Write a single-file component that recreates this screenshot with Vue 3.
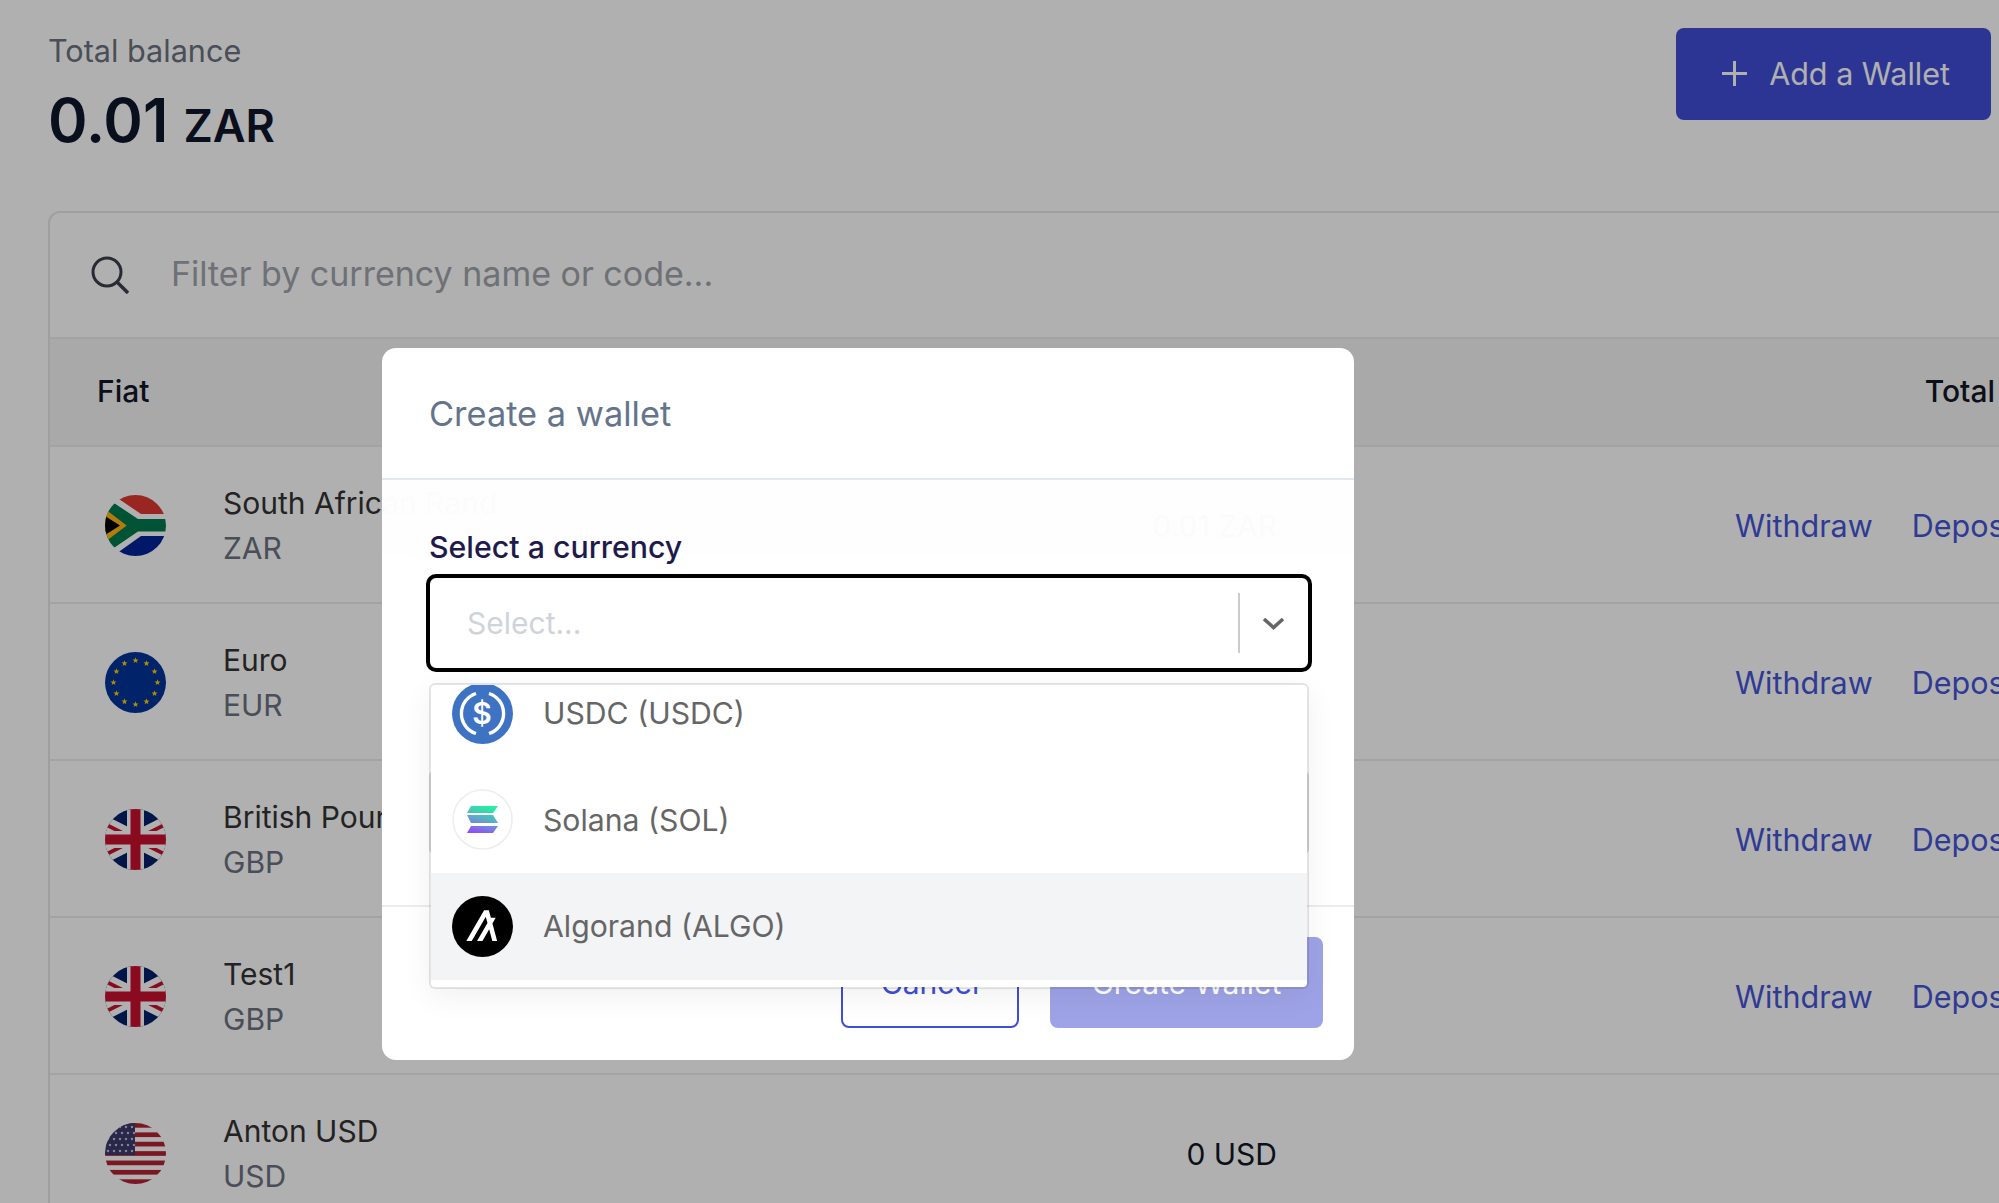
<script setup>
const rows = [
  { name: 'South African Rand', code: 'ZAR', total: '0.01 ZAR', flag: 'za', actions: true },
  { name: 'Euro', code: 'EUR', total: '0 EUR', flag: 'eu', actions: true },
  { name: 'British Pound', code: 'GBP', total: '0 GBP', flag: 'gb', actions: true },
  { name: 'Test1', code: 'GBP', total: '0 GBP', flag: 'gb', actions: true },
  { name: 'Anton USD', code: 'USD', total: '0 USD', flag: 'us', actions: false }
]

// five point star as a polygon string
const star = (cx, cy, r) => {
  const pts = []
  for (let i = 0; i < 10; i++) {
    const rad = i % 2 ? r * 0.42 : r
    const a = -Math.PI / 2 + (i * Math.PI) / 5
    pts.push((cx + rad * Math.cos(a)).toFixed(2) + ',' + (cy + rad * Math.sin(a)).toFixed(2))
  }
  return pts.join(' ')
}

const euStars = Array.from({ length: 12 }, (_, i) => {
  const a = (i * Math.PI) / 6
  return star(30.5 + 22 * Math.cos(a), 30.5 + 22 * Math.sin(a), 3.2)
})

const usStripes = [0, 2, 4, 6, 8, 10, 12].map((i) => (i * 61) / 13)

const usStars = []
for (let r = 0; r < 5; r++) {
  for (let c = 0; c < 5; c++) {
    usStars.push(star(3 + c * 6 + (r % 2 ? 2 : 0), 4 + r * 6, 1.6))
  }
}
</script>

<template>
  <div class="page">
    <div class="top">
      <div class="balance">
        <div class="balance-label">Total balance</div>
        <div class="balance-value">0.01 <span class="balance-code">ZAR</span></div>
      </div>
      <button class="add-btn">
        <svg class="plus" viewBox="0 0 25 25" width="25" height="25">
          <path d="M12.5 0v25M0 12.5h25" stroke="currentColor" stroke-width="3" fill="none" />
        </svg>
        Add a Wallet
      </button>
    </div>

    <div class="card">
      <div class="search">
        <svg class="search-icon" viewBox="0 0 38 38" width="38" height="38">
          <circle cx="16" cy="16" r="14" stroke="#3a3f4a" stroke-width="3" fill="none" />
          <path d="M26 26l11 11" stroke="#3a3f4a" stroke-width="3.4" fill="none" />
        </svg>
        <span class="search-text">Filter by currency name or code...</span>
      </div>

      <div class="head">
        <span>Fiat</span>
        <span class="head-total">Total</span>
      </div>

      <div v-for="r in rows" :key="r.name + r.flag" class="row">
        <svg v-if="r.flag === 'za'" class="flag" viewBox="0 0 61 61">
          <rect width="61" height="61" fill="#fff" />
          <path d="M8 0L36 19H61V0Z" fill="#de3831" />
          <path d="M8 61L36 41H61V61Z" fill="#002395" />
          <path d="M0 2L33 24H61V36.5H33L0 59Z" fill="#007a4d" />
          <path d="M0 14L21.7 30.5L0 47Z" fill="#ffb612" />
          <path d="M0 21L15 30.5L0 40Z" fill="#000" />
        </svg>

        <svg v-else-if="r.flag === 'eu'" class="flag" viewBox="0 0 61 61">
          <rect width="61" height="61" fill="#003399" />
          <polygon v-for="(s, i) in euStars" :key="i" :points="s" fill="#ffcc00" />
        </svg>

        <svg v-else-if="r.flag === 'gb'" class="flag" viewBox="0 0 61 61">
          <rect width="61" height="61" fill="#012169" />
          <path d="M-30 0L91 61M91 0L-30 61" stroke="#fff" stroke-width="16" />
          <path d="M-30 0L91 61M91 0L-30 61" stroke="#c8102e" stroke-width="4" />
          <path d="M30.5 0V61M0 30.5H61" stroke="#fff" stroke-width="17" />
          <path d="M30.5 0V61M0 30.5H61" stroke="#c8102e" stroke-width="10" />
        </svg>

        <svg v-else class="flag" viewBox="0 0 61 61">
          <rect width="61" height="61" fill="#fff" />
          <rect v-for="y in usStripes" :key="y" x="0" :y="y" width="61" height="4.7" fill="#b22234" />
          <rect width="30" height="32" fill="#3c3b6e" />
          <polygon v-for="(s, i) in usStars" :key="i" :points="s" fill="#fff" />
        </svg>

        <div class="names">
          <div class="name">{{ r.name }}</div>
          <div class="code">{{ r.code }}</div>
        </div>
        <div class="total">{{ r.total }}</div>
        <div v-if="r.actions" class="actions">
          <a>Withdraw</a>
          <a>Deposit</a>
        </div>
      </div>
    </div>

    <div class="overlay">
      <div class="modal">
        <div class="modal-head">Create a wallet</div>
        <div class="modal-body">
          <div class="field-label">Select a currency</div>
          <div class="select-wrap">
            <div class="select">
              <span class="select-placeholder">Select...</span>
              <span class="select-sep"></span>
              <svg class="chevron" viewBox="0 0 23 13" width="23" height="13">
                <path d="M2 2l9.5 8.5L21 2" stroke="#666" stroke-width="3.6" fill="none" />
              </svg>
            </div>
            <div class="dropdown">
              <div class="options">
                <div class="option">
                  <svg class="coin" viewBox="0 0 61 61">
                    <circle cx="30.5" cy="30.5" r="30.5" fill="#3e73c4" />
                    <path d="M24 10.5A21 21 0 0 0 24 50.5M37 10.5A21 21 0 0 1 37 50.5" stroke="#fff" stroke-width="3.4" fill="none" />
                    <text x="30" y="41" text-anchor="middle" class="coin-dollar">$</text>
                  </svg>
                  USDC (USDC)
                </div>
                <div class="option">
                  <svg class="coin coin-sol" viewBox="0 0 61 61">
                    <defs>
                      <linearGradient id="solGrad" gradientUnits="userSpaceOnUse" x1="34" y1="15" x2="26" y2="46">
                        <stop offset="0" stop-color="#19fb9b" />
                        <stop offset="0.5" stop-color="#5fa8c8" />
                        <stop offset="1" stop-color="#9945ff" />
                      </linearGradient>
                    </defs>
                    <circle cx="30.5" cy="30.5" r="29.5" fill="#fff" stroke="#eeeef2" stroke-width="1.6" />
                    <path d="M19 17H46L41 24H15Z" fill="url(#solGrad)" />
                    <path d="M15 26H41L46 34H19Z" fill="url(#solGrad)" />
                    <path d="M19 37H46L41 44H15Z" fill="url(#solGrad)" />
                  </svg>
                  Solana (SOL)
                </div>
                <div class="option option-active">
                  <svg class="coin" viewBox="0 0 61 61">
                    <circle cx="30.5" cy="30.5" r="30.5" fill="#000" />
                    <path transform="translate(14 12) scale(0.33)" d="M94.3 100H79.7L70.2 64.6 49.8 100H33.5L65.1 45.3 60 26.4 17.4 100H1L54.9 6.6H69.2L75.4 29.7H90L80.1 46.9 94.3 100Z" fill="#fff" />
                  </svg>
                  Algorand (ALGO)
                </div>
              </div>
            </div>
          </div>
          <div class="second-input"></div>
        </div>
        <div class="modal-foot">
          <button class="btn-cancel">Cancel</button>
          <button class="btn-create">Create Wallet</button>
        </div>
      </div>
    </div>
  </div>
</template>

<style>
html, body {
  margin: 0;
  background: #fff;
}
</style>

<style scoped>
.page {
  position: relative;
  width: 1999px;
  height: 1203px;
  overflow: hidden;
  background: #fff;
  font-family: Inter, "Liberation Sans", sans-serif;
  color: #111827;
}

.top {
  display: flex;
  justify-content: space-between;
  align-items: flex-start;
  height: 211px;
  padding: 28px 8px 0 48px;
  box-sizing: border-box;
}

.balance-label {
  font-size: 30.6px;
  line-height: 44px;
  margin-top: 1px;
  color: #6b7280;
}

.balance-value {
  font-size: 60px;
  line-height: 72px;
  font-weight: 600;
  color: #0f172a;
  margin-top: 11px;
}

.balance-code {
  font-size: 45px;
}

.add-btn {
  display: flex;
  align-items: center;
  gap: 22px;
  height: 92px;
  padding: 0 41px 2px 46px;
  border: 0;
  border-radius: 8px;
  background: #404ed6;
  color: #fff;
  font-family: inherit;
  font-size: 30.5px;
}

.card {
  width: 2100px;
  margin-left: 48px;
  border: 2px solid #e6e6e6;
  border-radius: 12px 0 0 0;
  box-sizing: border-box;
}

.search {
  display: flex;
  align-items: center;
  height: 124px;
  padding-left: 41px;
  border-bottom: 2px solid #ececec;
}

.search-icon {
  margin-right: 42px;
}

.search-text {
  margin-bottom: 4px;
  font-size: 34px;
  color: #a0a4ab;
}

.head {
  display: flex;
  align-items: center;
  height: 104px;
  padding: 0 151px 2px 47px;
  border-bottom: 2px solid #ececec;
  background: #f5f5f5;
  font-size: 30px;
  font-weight: 500;
}

.head-total {
  margin-left: auto;
}

.row {
  display: grid;
  grid-template-columns: 61px 700px 411px auto;
  align-items: center;
  height: 153px;
  padding: 2px 0 0 55px;
  border-bottom: 2px solid #ececec;
}

.flag {
  width: 61px;
  height: 61px;
  border-radius: 50%;
}

.names {
  padding-left: 57px;
}

.name {
  font-size: 30px;
  line-height: 45px;
  color: #333;
}

.code {
  font-size: 30px;
  line-height: 45px;
  color: #6b7280;
}

.total {
  font-size: 30px;
  text-align: right;
  color: #111827;
}

.actions {
  display: flex;
  gap: 39px;
  padding-left: 458px;
  font-size: 30.5px;
  color: #4555d8;
}

.overlay {
  position: absolute;
  inset: 0;
  background: rgba(0, 0, 0, 0.31);
}

/* only the strip under the header lets the first row show through faintly */
.modal {
  position: absolute;
  left: 382px;
  top: 348px;
  width: 972px;
  height: 712px;
  border-radius: 14px;
  background: linear-gradient(#fff 132px, rgba(255, 255, 255, 0.985) 132px, rgba(255, 255, 255, 0.985) 205px, #fff 205px);
}

.modal-head {
  display: flex;
  align-items: center;
  height: 130px;
  padding-left: 47px;
  border-bottom: 2px solid #e2e8f0;
  font-size: 34.4px;
  color: #64748b;
}

.modal-body {
  padding: 47px 45px 50px 47px;
}

.field-label {
  height: 40px;
  margin-bottom: 7px;
  font-size: 30.3px;
  line-height: 40px;
  font-weight: 500;
  color: #1e1b4b;
}

.select-wrap {
  position: relative;
}

.select {
  display: flex;
  align-items: center;
  height: 98px;
  margin: 0 -3px;
  padding-left: 37px;
  border: 4px solid #000;
  border-radius: 10px;
  box-sizing: border-box;
  background: #fff;
}

.select-placeholder {
  flex: 1;
  font-size: 30px;
  color: #d0d4da;
}

.select-sep {
  width: 2px;
  height: 60px;
  background: #ccc;
}

.chevron {
  margin: 0 23px 0 22px;
}

.dropdown {
  position: absolute;
  z-index: 2;
  top: 109px;
  left: 0;
  right: 0;
  height: 306px;
  box-sizing: border-box;
  border: 2px solid rgba(0, 0, 0, 0.1);
  border-radius: 6px;
  background: #fff;
  background-clip: padding-box;
  box-shadow: 0 8px 30px rgba(0, 0, 0, 0.06);
  overflow: hidden;
}

.options {
  margin-top: -25px;
}

.option {
  display: flex;
  align-items: center;
  gap: 30px;
  height: 106.5px;
  padding-left: 21px;
  font-size: 30.2px;
  color: #666;
}

.option-active {
  background: #f3f4f6;
}

.coin {
  width: 61px;
  height: 61px;
  flex: none;
}

.coin-dollar {
  font-size: 30px;
  font-weight: 600;
  fill: #fff;
}

.second-input {
  height: 85px;
  margin-top: 98px;
  border: 2px solid #ddd;
  border-radius: 6px;
  box-sizing: border-box;
}

.modal-foot {
  display: flex;
  justify-content: flex-end;
  gap: 31px;
  padding: 30px 31px 32px;
  border-top: 2px solid #ececec;
}

.modal-foot button {
  height: 91px;
  border-radius: 8px;
  font-family: inherit;
  font-size: 30px;
}

.btn-cancel {
  width: 178px;
  border: 2px solid #404ed6;
  background: #fff;
  color: #404ed6;
}

.btn-create {
  width: 273px;
  border: 0;
  background: #9da3e6;
  color: #fff;
}
</style>
